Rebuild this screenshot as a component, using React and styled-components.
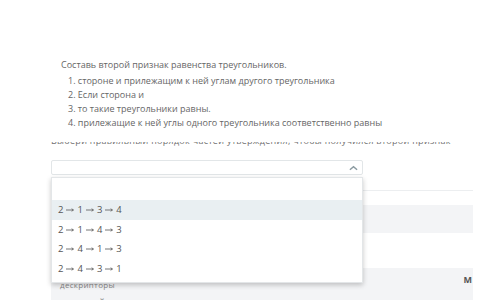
import React from 'react';
import styled, { createGlobalStyle } from 'styled-components';

const GlobalStyle = createGlobalStyle`
  html, body {
    margin: 0;
    padding: 0;
    background: #ffffff;
  }
  body {
    font-family: "Open Sans", "Liberation Sans", sans-serif;
    color: #666;
  }
`;

const options = [
  ['2', '1', '3', '4'],
  ['2', '1', '4', '3'],
  ['2', '4', '1', '3'],
  ['2', '4', '3', '1'],
];

const steps = [
  'стороне и прилежащим к ней углам другого треугольника',
  'Если сторона и',
  'то такие треугольники равны.',
  'прилежащие к ней углы одного треугольника соответственно равны',
];

function Arrow() {
  return (
    <ArrowIcon viewBox="0 0 8 4">
      <path d="M0 2 H7" stroke="#666" strokeWidth="0.9" />
      <path d="M5.6 0.8 L7.6 2 L5.6 3.2" fill="none" stroke="#666" strokeWidth="0.9" />
    </ArrowIcon>
  );
}

function App() {
  return (
    <Page>
      <GlobalStyle />
      <Question>
        <Title>Составь второй признак равенства треугольников.</Title>
        <Steps>
          {steps.map((s, i) => (
            <Step key={i}>{i + 1}. {s}</Step>
          ))}
        </Steps>
      </Question>

      <CutLine>
        <CutText>Выбери правильный порядок частей утверждения, чтобы получился второй признак</CutText>
      </CutLine>

      <SelectWrap>
        <SelectBox>
          <Chevron viewBox="0 0 10 6">
            <path d="M1 5 L5 1.5 L9 5" fill="none" stroke="#8a9aa0" strokeWidth="1.6" />
          </Chevron>
        </SelectBox>
        <Dropdown>
          <Option />
          {options.map((o, i) => (
            <Option key={i} active={i === 0}>
              {o.map((d, j) => (
                <React.Fragment key={j}>
                  {j > 0 && <Arrow />}
                  <span>{d}</span>
                </React.Fragment>
              ))}
            </Option>
          ))}
        </Dropdown>
      </SelectWrap>

      <Table>
        <Row height={14} border />
        <Row height={14} />
        <Row height={28} shaded />
        <Row height={35} />
        <Row height={25} shaded>
          <Cell>дескрипторы</Cell>
          <Mark>М</Mark>
        </Row>
        <Row height={20} shaded border>
          <Cell bold>критерий оценивания</Cell>
        </Row>
      </Table>
    </Page>
  );
}

export default App;

const Page = styled.div`
  width: 500px;
  height: 300px;
  overflow: hidden;
  padding-top: 1px;
  box-sizing: border-box;
`;

const Question = styled.div`
  padding: 57px 0 0 61px;
  font-size: 9px;
  line-height: 14px;
  color: #666;
`;

const Title = styled.div`
  margin-bottom: 2px;
`;

const Steps = styled.div`
  padding-left: 7px;
`;

const Step = styled.div``;

const CutLine = styled.div`
  margin: 12px 0 0 51px;
  width: 421px;
  height: 4px;
  overflow: hidden;
  clip-path: inset(0);
`;

const CutText = styled.div`
  margin-top: -6px;
  font-size: 9px;
  line-height: 9px;
  color: #707070;
  white-space: nowrap;
  letter-spacing: 0.3px;
`;

const SelectWrap = styled.div`
  position: relative;
  margin: 14px 0 0 51px;
  width: 312px;
  z-index: 2;
`;

const SelectBox = styled.div`
  height: 15px;
  border: 1px solid #e2e6e8;
  border-radius: 2px;
  box-sizing: border-box;
  display: flex;
  align-items: center;
  justify-content: flex-end;
  padding-right: 4px;
`;

const Chevron = styled.svg`
  width: 9px;
  height: 6px;
`;

const Dropdown = styled.div`
  position: absolute;
  top: 17px;
  left: 0;
  width: 312px;
  background: #fff;
  border: 1px solid #e3e6e8;
  box-sizing: border-box;
  box-shadow: 0 2px 5px rgba(0, 0, 0, 0.22);
  padding-bottom: 4px;
`;

const Option = styled.div`
  height: ${(p) => (p.children ? '19.5px' : '22px')};
  display: flex;
  align-items: center;
  gap: 2px;
  padding-left: 6px;
  font-size: 9.5px;
  color: #555;
  background: ${(p) => (p.active ? '#e9eff2' : '#fff')};
`;

const ArrowIcon = styled.svg`
  width: 8px;
  height: 4px;
  margin: 1px 1px 0;
`;

const Table = styled.div`
  margin: 2px 0 0 51px;
  width: 422px;
`;

const Row = styled.div`
  height: ${(p) => p.height}px;
  display: flex;
  align-items: flex-end;
  justify-content: space-between;
  padding: 0 1px 3px 9px;
  box-sizing: border-box;
  background: ${(p) => (p.shaded ? '#f3f4f6' : '#fff')};
  border-bottom: ${(p) => (p.border ? '1px solid #eceef0' : 'none')};
`;

const Cell = styled.span`
  font-size: 8px;
  color: #888;
  letter-spacing: 0.3px;
  font-weight: ${(p) => (p.bold ? 600 : 400)};
  text-transform: ${(p) => (p.bold ? 'uppercase' : 'none')};
`;

const Mark = styled.span`
  font-size: 9px;
  font-weight: 700;
  color: #555;
  margin-bottom: 4px;
`;
